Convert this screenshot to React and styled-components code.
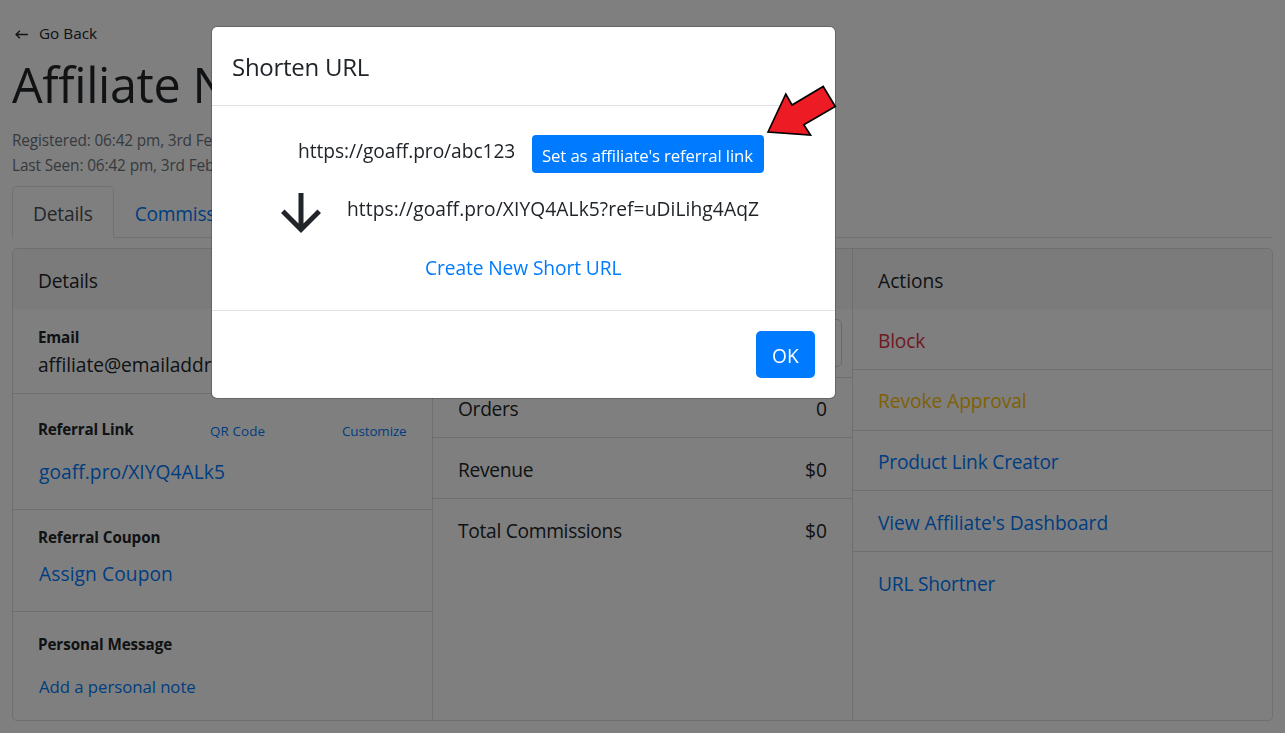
import React from "react";
import styled, { createGlobalStyle } from "styled-components";

const GlobalStyle = createGlobalStyle`
  * { box-sizing: border-box; }
  body {
    margin: 0;
    background: #fff;
    color: #212529;
    font-family: "Segoe UI", "Open Sans", "Noto Sans", sans-serif;
    font-size: 19.2px;
    line-height: 30px;
    overflow: hidden;
  }
`;

const Page = styled.main`
  height: 733px;
  padding: 18px 12px 0;
`;

const Text = styled.span`
  display: block;
  white-space: nowrap;
  letter-spacing: ${(p) => p.$track || 0}px;
`;

const BackLink = styled.div`
  display: flex;
  align-items: center;
  gap: 9px;
  height: 30px;
  padding-left: 1px;
  font-size: 15.3px;
  svg { display: block; margin-top: 3px; }
`;

const Title = styled.h1`
  margin: 6px 0 12px;
  height: 60px;
  font-size: 48.5px;
  font-weight: 400;
  line-height: 60px;
`;

const Meta = styled.div`
  color: #6c757d;
  font-size: 15.4px;
  line-height: 25px;
  height: 60px;
  padding-top: 2px;
`;

const Tabs = styled.nav`
  display: flex;
  height: 52px;
  border-bottom: 1px solid #dee2e6;
`;

const Tab = styled.div`
  height: 52px;
  padding: 12px 20px 0;
  border: 1px solid ${(p) => (p.$active ? "#dee2e6" : "transparent")};
  border-bottom-color: ${(p) => (p.$active ? "#fff" : "transparent")};
  border-radius: 5px 5px 0 0;
  color: ${(p) => (p.$active ? "#495057" : "#007bff")};
`;

const CardGroup = styled.section`
  display: grid;
  grid-template-columns: 420px 420px 1fr;
  height: 473px;
  margin-top: 10px;
  border: 1px solid rgba(0, 0, 0, 0.125);
  border-radius: 5px;
  overflow: hidden;
`;

const Card = styled.div`
  border-right: 1px solid rgba(0, 0, 0, 0.125);
  &:last-child { border-right: 0; }
`;

const CardHeader = styled.header`
  height: 60px;
  padding: 17px 25px 0;
  background: rgba(0, 0, 0, 0.03);
`;

const Item = styled.div`
  height: ${(p) => p.$h}px;
  padding: ${(p) => p.$top || 17}px 25px 0;
  border-bottom: 1px solid rgba(0, 0, 0, 0.125);
  color: ${(p) => p.$color || "inherit"};
  &:last-child { border-bottom: 0; }
`;

const StatItem = styled(Item)`
  display: flex;
  justify-content: space-between;
`;

const Label = styled.div`
  font-size: 15.2px;
  font-weight: 700;
  line-height: 24px;
`;

const LabelRow = styled.div`
  display: grid;
  grid-template-columns: 172px 132px auto;
  height: 24px;
`;

const SmallLink = styled.div`
  color: #007bff;
  font-size: 13.4px;
  line-height: 29px;
`;

const Value = styled.div`
  margin-top: ${(p) => p.$gap || 0}px;
  padding-left: ${(p) => (p.$link ? 1 : 0)}px;
  color: ${(p) => (p.$link ? "#007bff" : "inherit")};
  font-size: ${(p) => p.$size || 19.2}px;
`;

const Select = styled.div`
  width: 399px;
  height: 48px;
  margin-left: -15px;
  border: 1px solid #ced4da;
  border-radius: 5px;
`;

const Backdrop = styled.div`
  position: fixed;
  inset: 0;
  display: flex;
  align-items: flex-start;
  padding: 26px 0 0 211px;
  background: rgba(0, 0, 0, 0.5);
`;

const Dialog = styled.div`
  position: relative;
  width: 625px;
  border: 1px solid rgba(0, 0, 0, 0.2);
  border-radius: 6px;
  background: #fff;
  background-clip: padding-box;
`;

const DialogHeader = styled.header`
  height: 79px;
  padding: 21px 20px 0;
  border-bottom: 1px solid #dee2e6;
  font-size: 24px;
  line-height: 38px;
`;

const DialogBody = styled.div`
  height: 204px;
  padding-top: 29px;
`;

const UrlRow = styled.div`
  display: flex;
  padding-left: 86px;
`;

const UrlText = styled.div`
  width: 234px;
  padding-top: 1px;
`;

const TargetRow = styled.div`
  display: flex;
  gap: 16px;
  height: 60px;
  margin-top: 10px;
  padding-left: 59px;
  svg { display: block; }
  > span { padding-top: 11px; }
`;

const CreateLink = styled.div`
  padding: 10px 0 0 213px;
  color: #007bff;
`;

const Button = styled.button`
  display: block;
  width: ${(p) => p.$w}px;
  height: ${(p) => p.$h}px;
  padding: ${(p) => p.$pad};
  border: 0;
  border-radius: ${(p) => p.$r}px;
  background: #007bff;
  color: #fff;
  font-family: inherit;
  font-size: ${(p) => p.$size}px;
  line-height: 30px;
  text-align: left;
`;

const DialogFooter = styled.footer`
  display: flex;
  justify-content: flex-end;
  height: 88px;
  padding: 20px 20px 0;
  border-top: 1px solid #dee2e6;
`;

const Pointer = styled.svg`
  position: absolute;
  left: 552px;
  top: 55px;
`;

const actions = [
  { label: "Block", color: "#dc3545", h: 61, track: -0.2 },
  { label: "Revoke Approval", color: "#ffc107", h: 61, top: 16, track: -0.07 },
  { label: "Product Link Creator", color: "#007bff", h: 60, top: 16, track: -0.22 },
  { label: "View Affiliate's Dashboard", color: "#007bff", h: 61, track: -0.08 },
  { label: "URL Shortner", color: "#007bff", h: 61, track: -0.22 },
];

const stats = [
  { label: "Orders", value: "0", h: 60, top: 16, track: -0.3 },
  { label: "Revenue", value: "$0", h: 61, track: -0.3 },
  { label: "Total Commissions", value: "$0", h: 61, track: -0.3 },
];

export default function App() {
  return (
    <>
      <GlobalStyle />
      <Page>
        <BackLink>
          <svg width="17" height="17" viewBox="0 0 24 24" fill="currentColor">
            <path d="M21 11H6.83l3.58-3.59L9 6l-6 6 6 6 1.41-1.41L6.83 13H21z" />
          </svg>
          <Text>Go Back</Text>
        </BackLink>
        <Title><Text $track={-0.35}>Affiliate N</Text></Title>
        <Meta>
          <Text $track={-0.15}>Registered: 06:42 pm, 3rd Feb</Text>
          <Text $track={-0.13}>Last Seen: 06:42 pm, 3rd Feb</Text>
        </Meta>
        <Tabs>
          <Tab $active><Text $track={-0.2}>Details</Text></Tab>
          <Tab><Text $track={-0.25}>Commissions</Text></Tab>
        </Tabs>
        <CardGroup>
          <Card>
            <CardHeader><Text $track={-0.2}>Details</Text></CardHeader>
            <Item $h={85} $top={16}>
              <Label><Text $track={-0.15}>Email</Text></Label>
              <Value $gap={1}><Text $track={-0.05}>affiliate@emailaddress</Text></Value>
            </Item>
            <Item $h={116} $top={23}>
              <LabelRow>
                <Label><Text $track={-0.2}>Referral Link</Text></Label>
                <SmallLink><Text $track={0.1}>QR Code</Text></SmallLink>
                <SmallLink><Text $track={-0.1}>Customize</Text></SmallLink>
              </LabelRow>
              <Value $link $gap={16}><Text $track={0.05}>goaff.pro/XIYQ4ALk5</Text></Value>
            </Item>
            <Item $h={102} $top={15}>
              <Label><Text $track={-0.07}>Referral Coupon</Text></Label>
              <Value $link $gap={10}><Text $track={0.08}>Assign Coupon</Text></Value>
            </Item>
            <Item $h={108} $top={20}>
              <Label><Text $track={-0.07}>Personal Message</Text></Label>
              <Value $link $gap={16} $size={16.8}><Text $track={-0.06}>Add a personal note</Text></Value>
            </Item>
          </Card>
          <Card>
            <CardHeader />
            <Item $h={69} $top={10}><Select /></Item>
            {stats.map((s) => (
              <StatItem key={s.label} $h={s.h} $top={s.top}>
                <Text $track={s.track}>{s.label}</Text>
                <Text>{s.value}</Text>
              </StatItem>
            ))}
          </Card>
          <Card>
            <CardHeader><Text>Actions</Text></CardHeader>
            {actions.map((a) => (
              <Item key={a.label} $h={a.h} $top={a.top} $color={a.color}>
                <Text $track={a.track}>{a.label}</Text>
              </Item>
            ))}
          </Card>
        </CardGroup>
      </Page>
      <Backdrop>
        <Dialog>
          <DialogHeader><Text $track={-0.27}>Shorten URL</Text></DialogHeader>
          <DialogBody>
            <UrlRow>
              <UrlText><Text $track={-0.06}>https://goaff.pro/abc123</Text></UrlText>
              <Button $w={232} $h={38} $r={4} $size={16.8} $pad="4px 10px 0">
                <Text $track={-0.14}>Set as affiliate's referral link</Text>
              </Button>
            </UrlRow>
            <TargetRow>
              <svg width="60" height="60" viewBox="0 0 24 24" fill="currentColor">
                <path d="M20 12l-1.41-1.41L13 16.17V4h-2v12.17l-5.58-5.59L4 12l8 8 8-8z" />
              </svg>
              <Text $track={0.09}>https://goaff.pro/XIYQ4ALk5?ref=uDiLihg4AqZ</Text>
            </TargetRow>
            <CreateLink><Text $track={-0.1}>Create New Short URL</Text></CreateLink>
          </DialogBody>
          <DialogFooter>
            <Button $w={59} $h={47} $r={5} $size={19.2} $pad="2px 0 0 16px">
              <Text>OK</Text>
            </Button>
          </DialogFooter>
          <Pointer width="76" height="58" viewBox="764 82 76 58">
            <path
              d="M768 132 L785.8 94 L792 105 L823.2 86.5 L835.3 106.5 L803.8 124.7 L810.5 135 Z"
              fill="#ed1c24"
              stroke="#000"
              strokeWidth="1.7"
            />
          </Pointer>
        </Dialog>
      </Backdrop>
    </>
  );
}
